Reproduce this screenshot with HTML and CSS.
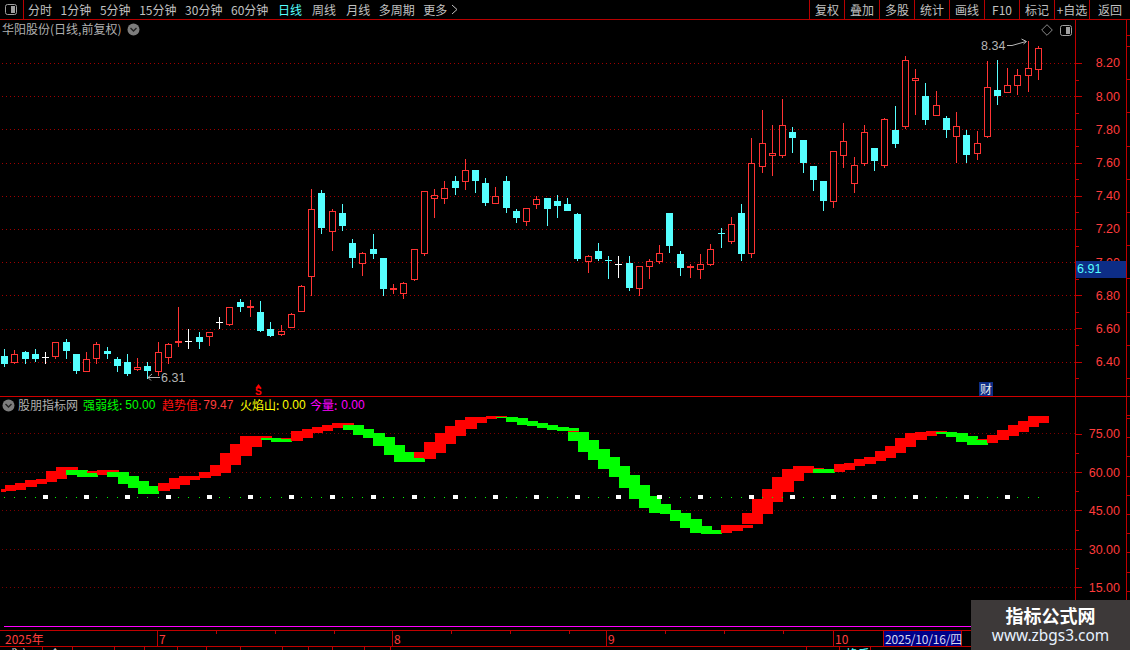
FILE: index.html
```html
<!DOCTYPE html>
<html lang="zh-CN">
<head>
<meta charset="utf-8">
<title>华阳股份 日线</title>
<link rel="stylesheet" href="styles.css">
</head>
<body>
<div class="app">
  <header class="toolbar">
    <div class="panel-toggle">
      <svg class="toggle-icon" width="12" height="11" viewBox="0 0 12 11"><rect x="0.5" y="0.5" width="11" height="10" rx="2" fill="none" stroke="#a0a0a0"/><rect x="6" y="2" width="4" height="7" fill="#a0a0a0"/></svg>
    </div>
    <nav class="periods">
      <span>分时</span><span>1分钟</span><span>5分钟</span><span>15分钟</span><span>30分钟</span><span>60分钟</span>
      <span class="active">日线</span><span class="wide">周线</span><span class="wide">月线</span><span>多周期</span>
      <span class="more">更多<svg width="7" height="11" viewBox="0 0 7 11"><path d="M1 1l5 4.5-5 4.5" fill="none" stroke="#c0c0c0"/></svg></span>
    </nav>
    <nav class="actions">
      <span>复权</span><span>叠加</span><span>多股</span><span>统计</span><span>画线</span><span>F10</span><span>标记</span><span>+自选</span><span class="last">返回</span>
    </nav>
  </header>

  <section class="pane price-pane">
    <div class="plot">
      <svg id="price-chart" class="chart" width="1075" height="376" viewBox="0 20 1075 376"></svg>
      <div class="chart-title">
        <span>华阳股份(日线,前复权)</span>
        <svg class="chevron" width="13" height="13" viewBox="0 0 13 13"><circle cx="6.5" cy="6.5" r="6" fill="#7d7d7d"/><path d="M3.5 5l3 3 3-3" fill="none" stroke="#222" stroke-width="1.4"/></svg>
      </div>
      <div class="chart-tools">
        <svg width="12" height="12" viewBox="0 0 12 12"><path d="M6 .7L11.3 6 6 11.3.7 6z" fill="none" stroke="#8a8a8a"/></svg>
        <svg width="12" height="11" viewBox="0 0 12 11"><rect x="0.5" y="0.5" width="11" height="10" rx="2" fill="none" stroke="#a0a0a0"/><rect x="6" y="2" width="4" height="7" fill="#a0a0a0"/></svg>
      </div>
      <span class="note note-high">8.34</span>
      <span class="note note-low">6.31</span>
      <span class="cai">财</span>
    </div>
    <div class="axis price-axis">
      <div class="tick">8.20</div><div class="tick">8.00</div><div class="tick">7.80</div><div class="tick">7.60</div><div class="tick">7.40</div><div class="tick">7.20</div><div class="tick">7.00</div><div class="tick">6.80</div><div class="tick">6.60</div><div class="tick">6.40</div>
      <span class="last-price">6.91</span>
    </div>
    <div class="edge edge-price"></div>
  </section>

  <section class="pane indicator-pane">
    <div class="plot">
      <svg id="indicator-chart" class="chart" width="1075" height="233" viewBox="0 397 1075 233"></svg>
      <div class="legend">
        <svg class="chevron" width="13" height="13" viewBox="0 0 13 13"><circle cx="6.5" cy="6.5" r="6" fill="#7d7d7d"/><path d="M3.5 5l3 3 3-3" fill="none" stroke="#222" stroke-width="1.4"/></svg>
        <span class="legend-name">股朋指标网</span>
        <span class="legend-item green">强弱线:<b>50.00</b></span>
        <span class="legend-item red">趋势值:<b>79.47</b></span>
        <span class="legend-item yellow">火焰山:<b>0.00</b></span>
        <span class="legend-item magenta">今量:<b>0.00</b></span>
      </div>
    </div>
    <div class="axis indicator-axis">
      <div class="tick tall">75.00</div><div class="tick tall">60.00</div><div class="tick tall">45.00</div><div class="tick tall">30.00</div><div class="tick tall">15.00</div>
    </div>
    <div class="edge edge-indicator"></div>
  </section>

  <footer class="dates">
    <span class="month year">2025年</span>
    <span class="month m7">7</span>
    <span class="month m8">8</span>
    <span class="month m9">9</span>
    <span class="month m10">10</span>
    <span class="cursor-date">2025/10/16/四</span>
  </footer>
  <div class="statusbar">
    <span>成交</span><span>金</span><span></span><span></span><span></span><span></span><span></span><span></span><span></span><span></span><span></span><span></span><span></span><span class="white">一</span><span class="cyan">换手</span><span></span>
  </div>
</div>
<aside class="watermark">
  <strong>指标公式网</strong>
  <span>www.zbgs3.com</span>
</aside>
<script src="script.js"></script>
</body>
</html>
```

FILE: styles.css
```css
* { box-sizing: border-box; }
html, body { margin: 0; padding: 0; background: #000; }
body {
  width: 1130px;
  height: 650px;
  overflow: hidden;
  position: relative;
  font-family: "Noto Sans CJK SC", "Liberation Sans", sans-serif;
  font-size: 12px;
  color: #c0c0c0;
}
.app { display: flex; flex-direction: column; height: 650px; }

/* toolbar */
.toolbar {
  display: flex;
  height: 20px;
  flex: none;
  border-bottom: 1px solid #b80000;
  line-height: 19px;
}
.panel-toggle {
  width: 24px;
  border-right: 1px solid #b80000;
  display: flex;
  align-items: center;
  justify-content: center;
  padding-right: 1px;
}
.periods { display: flex; gap: 8.6px; padding-left: 4px; }
.periods .active { color: #55ffff; margin-left: 1px; }
.periods .wide { margin-left: 1.5px; }
.more { display: flex; align-items: center; gap: 4px; }
.actions { display: flex; margin-left: auto; }
.actions span {
  width: 35px;
  border-left: 1px solid #b80000;
  text-align: center;
}
.actions .last { width: 41px; }

/* panes */
.pane { display: flex; flex: none; position: relative; }
.price-pane { height: 377px; border-bottom: 1px solid #d00000; }
.indicator-pane { height: 233px; }
.plot { width: 1075px; position: relative; flex: none; }
.chart { display: block; }
.axis {
  flex: none;
  width: 52px;
  position: relative;
  border-left: 1px solid #c00000;
  border-right: 1px solid #c00000;
  color: #ff3c3c;
  font-family: "Liberation Sans", sans-serif;
  font-size: 12.5px;
  text-align: right;
}
.price-axis { padding-top: 26.4px; }
.indicator-axis { padding-top: 17.4px; }
.tick {
  height: 33.2px;
  line-height: 35px;
  padding-right: 6px;
  position: relative;
}
.tick.tall { height: 38.4px; line-height: 40.4px; }
.tick::before, .tick::after {
  content: "";
  position: absolute;
  left: 0;
  height: 1px;
  background: #c00000;
}
.tick::before { top: 50%; width: 6px; }
.tick::after { top: 100%; width: 3px; }
.edge { flex: none; width: 3px; background-repeat: repeat-y; }
.edge-price {
  background-image: repeating-linear-gradient(#c00000 0 1px, transparent 1px 33.2px);
  background-position: 0 26px;
}
.edge-indicator {
  background-image: repeating-linear-gradient(#c00000 0 1px, transparent 1px 19.2px);
  background-position: 0 21px;
}
.last-price {
  position: absolute;
  left: 0;
  right: 0;
  top: 241px;
  height: 17px;
  line-height: 17px;
  background: #0d2d86;
  color: #55ffff;
  text-align: left;
  padding-left: 1px;
}

/* overlays on the charts */
.chart-title {
  position: absolute;
  left: 2px;
  top: 0;
  height: 18px;
  display: flex;
  align-items: center;
  gap: 6px;
  color: #b0b0b0;
  line-height: 18px;
}
.chart-tools {
  position: absolute;
  right: 3px;
  top: 4px;
  display: flex;
  gap: 7px;
  align-items: center;
}
.note {
  position: absolute;
  color: #b4b4b4;
  font-family: "Liberation Sans", sans-serif;
  font-size: 12.5px;
  line-height: 14px;
}
.note-high { left: 981px; top: 19px; }
.note-low { left: 161px; top: 351px; }
.cai {
  position: absolute;
  left: 979px;
  top: 362px;
  width: 14px;
  height: 14px;
  line-height: 14px;
  text-align: center;
  background: #0d2d86;
  color: #e8e8e8;
}
.legend {
  position: absolute;
  left: 2px;
  top: 0;
  height: 16px;
  display: flex;
  align-items: center;
  line-height: 16px;
}
.legend-name { margin-left: 3px; width: 60px; color: #b0b0b0; }
.legend-item { display: flex; }
.legend-item b {
  font-weight: 400;
  font-family: "Liberation Sans", sans-serif;
  margin-left: 3px;
}
.green { margin-left: 5px; width: 79px; color: #00ff00; }
.red { width: 78px; color: #ff1010; }
.red b { color: #ff3c3c; margin-left: 2px; }
.yellow { width: 70px; color: #ffff00; }
.magenta { color: #ff00ff; }
.magenta b { margin-left: 4px; }

/* time axis */
.dates {
  display: flex;
  flex: none;
  height: 17px;
  border-top: 1px solid #c00000;
  border-bottom: 1px solid #c00000;
  color: #ff3c3c;
  line-height: 15px;
}
.month {
  padding-left: 1px;
  border-left: 1px solid #c00000;
  background-image: repeating-linear-gradient(90deg, transparent 0 58px, #c00000 58px 59px);
  background-size: 100% 3px;
  background-repeat: no-repeat;
}
.year { width: 157px; padding-left: 5px; border-left: 0; background: none; }
.m7 { width: 235px; }
.m8 { width: 214px; }
.m9 { width: 227px; }
.m10 { width: 50px; background: none; }
.cursor-date {
  width: 79px;
  padding-left: 1px;
  background: #000088;
  border-left: 1px solid #c00000;
  border-right: 1px solid #c00000;
  color: #d8d8f0;
  white-space: nowrap;
  letter-spacing: -0.2px;
}
.statusbar {
  flex: none;
  height: 3px;
  overflow: hidden;
  display: grid;
  grid-template-columns: 43px 30px 42px 30px 33px 29px 34px 42px 26px 24px 32px 26px 416px 33px 31px 1fr;
  line-height: 14px;
  color: #d0d0d0;
}
.statusbar span { border-right: 1px solid #c00000; padding-left: 6px; }
.statusbar .cyan { color: #55ffff; }

/* watermark */
.watermark {
  position: absolute;
  left: 971px;
  top: 600px;
  width: 159px;
  height: 50px;
  padding-top: 1px;
  background: #3d3939;
  display: flex;
  flex-direction: column;
  align-items: center;
  color: #fff;
}
.watermark strong { font-size: 18px; line-height: 28px; font-weight: 700; }
.watermark span {
  font-family: "Noto Sans", sans-serif;
  font-size: 15.4px;
  line-height: 14px;
  color: #e8f2ff;
}
```

FILE: script.js
```js
(function () {
  var NS = "http://www.w3.org/2000/svg";
  var RED = "#ff3333", CYAN = "#55ffff", WHITE = "#ffffff";

  function el(parent, name, attrs) {
    var node = document.createElementNS(NS, name);
    for (var key in attrs) node.setAttribute(key, attrs[key]);
    parent.appendChild(node);
    return node;
  }
  function rect(parent, x, y, w, h, fill) {
    return el(parent, "rect", { x: x, y: y, width: w, height: h, fill: fill, "shape-rendering": "crispEdges" });
  }
  function gridLine(parent, y, color) {
    var d = "";
    for (var x = 2; x < 1075; x += 4) d += "M" + x + " " + y + "h1v1h-1z";
    el(parent, "path", { d: d, fill: color, "shape-rendering": "crispEdges" });
  }

  /* type, body top, body bottom, high, low — in pixels of the page */
  var candles = [
    "c356,364,349,367","r354,363,350,364","c352,359,351,364","c354,359,349,362","w357,357,352,364",
    "r342,357,342,359","c342,351,339,359","c354,371,354,374","r359,372,352,372","r344,359,342,364",
    "c351,354,347,359","c359,366,357,372","c362,374,354,376","r367,370,358,371","c366,371,362,379",
    "r352,372,342,376","r344,358,343,364","f341,343,307,347","w341,341,329,349","c337,342,332,349",
    "r332,337,332,346","w322,322,317,329","r307,325,307,326","c302,307,299,312","f306,308,300,317",
    "c312,331,301,332","c329,336,322,337","r331,335,325,336","r314,328,313,328","r286,312,285,312",
    "r209,277,189,296","c193,228,190,234","r211,232,209,251","c213,226,204,231","c243,258,239,268",
    "r253,264,252,276","c249,254,234,259","c258,289,258,296","f288,290,284,294","r283,294,282,299",
    "r249,280,249,281","r191,254,191,256","r195,199,189,218","r188,199,181,204","c181,188,176,195",
    "r170,182,159,190","c170,181,170,193","c183,203,178,206","r196,204,187,204","c181,208,176,213",
    "c211,218,209,223","r208,222,208,226","r199,205,196,209","c198,209,198,226","c201,206,195,218",
    "c204,211,198,211","c214,259,213,261","r256,262,255,273","c251,259,243,261","x260,260,256,279",
    "w264,264,256,278","c263,288,256,291","r266,289,266,296","r261,267,259,279","r253,262,245,264",
    "c213,246,213,253","c254,268,251,276","f266,268,264,278","r264,270,254,279","r249,265,244,266",
    "x233,233,228,248","r224,242,217,244","c213,254,204,261","r163,254,138,258","r143,167,110,173",
    "r153,156,125,176","r125,156,99,158","c132,138,127,153","c140,163,140,173","c166,180,166,191",
    "c181,201,181,211","r151,202,151,208","r141,156,123,168","r165,184,157,193","r132,164,125,166",
    "c148,161,148,171","r119,166,118,168","c130,144,106,148","r60,127,56,129","r78,81,69,115",
    "c96,120,83,125","r105,116,91,116","c118,130,116,138","r126,137,112,163","c135,155,130,163",
    "r143,154,131,160","r87,137,61,138","c90,96,60,105","r85,93,68,93","r75,86,69,95",
    "r68,76,41,92","r48,70,46,80"
  ];

  /* one or more segments per band bar: colour letter, top, bottom */
  var band = [
    "r489,492","r485,491","r483,490","r480,487","r479,484","r471,482","r467,479","r467,470 g470,475",
    "g470,477","r471,473 g473,477","r470,475","r470,472 g472,477","g472,484","g476,488","g481,494",
    "g486,494","r483,491","r478,489","r476,485","r476,480","r472,478","r465,476","r453,473","r444,465",
    "r436,456","r436,447","r436,438 g438,440","g438,442","r438,439 g439,442","r431,441","r429,438",
    "r427,433","r425,431","r423,428","r423,425 g425,430","g425,435","g429,438","g433,446","g437,455",
    "g445,462","g452,462","r452,458 g458,462","r442,459","r433,453","r426,444","r420,436","r417,429",
    "r417,423","r416,419","r416,417 g417,418","g417,422","g418,425","g421,426","g423,428","g425,430",
    "g427,431","g428,431 r431,432 g432,441","g432,452","g440,460","g449,469","g457,477","g466,488",
    "g475,499","g485,508","g496,513","g504,514","g510,521","g513,528","g519,533","g526,534","g530,534",
    "r525,533","r525,531","r513,524 r525,528","r499,524","r489,514","r477,502","r469,492","r466,481",
    "r466,473","r468,469 g469,473","g469,473","r464,472","r463,470","r459,466","r457,464","r451,461",
    "r446,458","r438,453","r433,447","r432,440","r431,436","r431,432 g432,434","g432,437","g433,442",
    "g436,445","r439,440 g440,445","r435,443","r430,440","r425,436","r421,432","r416,427","r416,423"
  ];

  var whiteDots = [4,8,12,16,20,24,28,32,36,40,44,48,52,56,60,64,68,73,77,81,85,89,94,98];

  function candleX(i) { return Math.round(4.2 + 10.235 * i); }

  function drawPrice(svg) {
    for (var y = 0; y < 10; y++) gridLine(svg, Math.round(63 + 33.2 * y), "#a00000");
    candles.forEach(function (spec, i) {
      var type = spec.charAt(0);
      var v = spec.slice(1).split(",").map(Number);
      var x = candleX(i);
      var color = type === "c" || type === "x" ? CYAN : type === "w" ? WHITE : RED;
      rect(svg, x, v[2], 1, v[3] - v[2], color);
      if (type === "c" || type === "f") {
        rect(svg, x - 3, v[0], 7, v[1] - v[0], color);
      } else if (type === "r") {
        el(svg, "rect", {
          x: x - 2.5, y: v[0] + 0.5, width: 6, height: v[1] - v[0] - 1,
          fill: "#000", stroke: color, "shape-rendering": "crispEdges"
        });
      } else {
        rect(svg, x - 3, v[0], 7, 1, color);
      }
    });
    var stroke = { fill: "none", stroke: "#b4b4b4" };
    el(svg, "path", Object.assign({ d: "M1007 45.5h5l7-2 7-2M1021.5 39l5 2.5-3 2.5" }, stroke));
    el(svg, "path", Object.assign({ d: "M160 377.5h-12M152 374l-4 3.5 3 3" }, stroke));
    el(svg, "path", { d: "M258.5 384l3 4h-6z", fill: "#ff0000" });
    el(svg, "text", {
      x: 255, y: 395, fill: "#ff0000", "font-size": "10", "font-weight": "700",
      "font-family": "Liberation Sans, sans-serif"
    }).textContent = "S";
  }

  function drawIndicator(svg) {
    [433, 472, 510, 549, 587].forEach(function (y) { gridLine(svg, y, "#7a0000"); });
    band.forEach(function (spec, k) {
      var left = k === 0 ? 1 : Math.round(5 + 10.23 * (k - 1));
      var right = Math.round(5 + 10.23 * k) + 1;
      spec.split(" ").forEach(function (seg) {
        var v = seg.slice(1).split(",").map(Number);
        rect(svg, left, v[0], right - left, v[1] - v[0], seg.charAt(0) === "g" ? "#00ff00" : "#ff0000");
      });
    });
    for (var i = 0; i < candles.length; i++) {
      var x = candleX(i);
      if (whiteDots.indexOf(i) >= 0) rect(svg, x - 2, 495, 5, 4, "#ffffff");
      else rect(svg, x, 497, 1, 1, "#00ff00");
    }
    rect(svg, 4, 626, 1071, 1, "#ff00ff");
  }

  drawPrice(document.getElementById("price-chart"));
  drawIndicator(document.getElementById("indicator-chart"));
})();
```
